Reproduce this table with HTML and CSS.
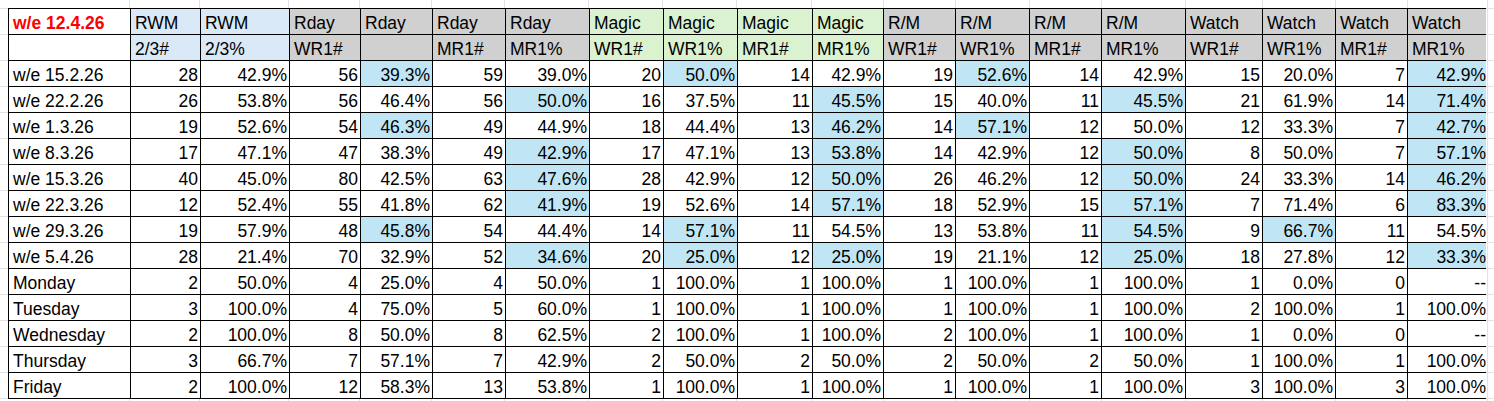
FILE: index.html
```html
<!DOCTYPE html>
<html lang="en">
<head>
<meta charset="utf-8">
<title>w/e 12.4.26</title>
<link rel="stylesheet" href="styles.css">
</head>
<body>
<table class="sheet">
  <colgroup>
    <col class="w122"><col class="w70"><col class="w89"><col class="w71"><col class="w72"><col class="w73"><col class="w84"><col class="w74"><col class="w74"><col class="w75"><col class="w71"><col class="w72"><col class="w74"><col class="w72"><col class="w84"><col class="w77"><col class="w73"><col class="w72"><col class="w81">
  </colgroup>
  <thead>
    <tr>
      <th class="title">w/e 12.4.26</th>
      <th class="blue">RWM</th><th class="blue">RWM</th>
      <th class="grey">Rday</th><th class="grey">Rday</th><th class="grey">Rday</th><th class="grey">Rday</th>
      <th class="green">Magic</th><th class="green">Magic</th><th class="green">Magic</th><th class="green">Magic</th>
      <th class="grey">R/M</th><th class="grey">R/M</th><th class="grey">R/M</th><th class="grey">R/M</th>
      <th class="grey">Watch</th><th class="grey">Watch</th><th class="grey">Watch</th><th class="grey">Watch</th>
    </tr>
    <tr>
      <th></th>
      <th class="blue">2/3#</th><th class="blue">2/3%</th>
      <th class="grey">WR1#</th><th class="grey"></th><th class="grey">MR1#</th><th class="grey">MR1%</th>
      <th class="green">WR1#</th><th class="green">WR1%</th><th class="green">MR1#</th><th class="green">MR1%</th>
      <th class="grey">WR1#</th><th class="grey">WR1%</th><th class="grey">MR1#</th><th class="grey">MR1%</th>
      <th class="grey">WR1#</th><th class="grey">WR1%</th><th class="grey">MR1#</th><th class="grey">MR1%</th>
    </tr>
  </thead>
  <tbody>
    <tr><td>w/e 15.2.26</td><td>28</td><td>42.9%</td><td>56</td><td class="hl">39.3%</td><td>59</td><td>39.0%</td><td>20</td><td class="hl">50.0%</td><td>14</td><td>42.9%</td><td>19</td><td class="hl">52.6%</td><td>14</td><td>42.9%</td><td>15</td><td>20.0%</td><td>7</td><td class="hl">42.9%</td></tr>
    <tr><td>w/e 22.2.26</td><td>26</td><td>53.8%</td><td>56</td><td>46.4%</td><td>56</td><td class="hl">50.0%</td><td>16</td><td>37.5%</td><td>11</td><td class="hl">45.5%</td><td>15</td><td>40.0%</td><td>11</td><td class="hl">45.5%</td><td>21</td><td>61.9%</td><td>14</td><td class="hl">71.4%</td></tr>
    <tr><td>w/e 1.3.26</td><td>19</td><td>52.6%</td><td>54</td><td class="hl">46.3%</td><td>49</td><td>44.9%</td><td>18</td><td>44.4%</td><td>13</td><td class="hl">46.2%</td><td>14</td><td class="hl">57.1%</td><td>12</td><td>50.0%</td><td>12</td><td>33.3%</td><td>7</td><td class="hl">42.7%</td></tr>
    <tr><td>w/e 8.3.26</td><td>17</td><td>47.1%</td><td>47</td><td>38.3%</td><td>49</td><td class="hl">42.9%</td><td>17</td><td>47.1%</td><td>13</td><td class="hl">53.8%</td><td>14</td><td>42.9%</td><td>12</td><td class="hl">50.0%</td><td>8</td><td>50.0%</td><td>7</td><td class="hl">57.1%</td></tr>
    <tr><td>w/e 15.3.26</td><td>40</td><td>45.0%</td><td>80</td><td>42.5%</td><td>63</td><td class="hl">47.6%</td><td>28</td><td>42.9%</td><td>12</td><td class="hl">50.0%</td><td>26</td><td>46.2%</td><td>12</td><td class="hl">50.0%</td><td>24</td><td>33.3%</td><td>14</td><td class="hl">46.2%</td></tr>
    <tr><td>w/e 22.3.26</td><td>12</td><td>52.4%</td><td>55</td><td>41.8%</td><td>62</td><td class="hl">41.9%</td><td>19</td><td>52.6%</td><td>14</td><td class="hl">57.1%</td><td>18</td><td>52.9%</td><td>15</td><td class="hl">57.1%</td><td>7</td><td>71.4%</td><td>6</td><td class="hl">83.3%</td></tr>
    <tr><td>w/e 29.3.26</td><td>19</td><td>57.9%</td><td>48</td><td class="hl">45.8%</td><td>54</td><td>44.4%</td><td>14</td><td class="hl">57.1%</td><td>11</td><td>54.5%</td><td>13</td><td>53.8%</td><td>11</td><td class="hl">54.5%</td><td>9</td><td class="hl">66.7%</td><td>11</td><td>54.5%</td></tr>
    <tr><td>w/e 5.4.26</td><td>28</td><td>21.4%</td><td>70</td><td>32.9%</td><td>52</td><td class="hl">34.6%</td><td>20</td><td class="hl">25.0%</td><td>12</td><td class="hl">25.0%</td><td>19</td><td>21.1%</td><td>12</td><td class="hl">25.0%</td><td>18</td><td>27.8%</td><td>12</td><td class="hl">33.3%</td></tr>
    <tr><td>Monday</td><td>2</td><td>50.0%</td><td>4</td><td>25.0%</td><td>4</td><td>50.0%</td><td>1</td><td>100.0%</td><td>1</td><td>100.0%</td><td>1</td><td>100.0%</td><td>1</td><td>100.0%</td><td>1</td><td>0.0%</td><td>0</td><td>--</td></tr>
    <tr><td>Tuesday</td><td>3</td><td>100.0%</td><td>4</td><td>75.0%</td><td>5</td><td>60.0%</td><td>1</td><td>100.0%</td><td>1</td><td>100.0%</td><td>1</td><td>100.0%</td><td>1</td><td>100.0%</td><td>2</td><td>100.0%</td><td>1</td><td>100.0%</td></tr>
    <tr><td>Wednesday</td><td>2</td><td>100.0%</td><td>8</td><td>50.0%</td><td>8</td><td>62.5%</td><td>2</td><td>100.0%</td><td>1</td><td>100.0%</td><td>2</td><td>100.0%</td><td>1</td><td>100.0%</td><td>1</td><td>0.0%</td><td>0</td><td>--</td></tr>
    <tr><td>Thursday</td><td>3</td><td>66.7%</td><td>7</td><td>57.1%</td><td>7</td><td>42.9%</td><td>2</td><td>50.0%</td><td>2</td><td>50.0%</td><td>2</td><td>50.0%</td><td>2</td><td>50.0%</td><td>1</td><td>100.0%</td><td>1</td><td>100.0%</td></tr>
    <tr><td>Friday</td><td>2</td><td>100.0%</td><td>12</td><td>58.3%</td><td>13</td><td>53.8%</td><td>1</td><td>100.0%</td><td>1</td><td>100.0%</td><td>1</td><td>100.0%</td><td>1</td><td>100.0%</td><td>3</td><td>100.0%</td><td>3</td><td>100.0%</td></tr>
  </tbody>
</table>
</body>
</html>
```
FILE: styles.css
```css
html {
  background-color: #ffffff;
  background-image:
    linear-gradient(to right,
      transparent 0 129px, #e2e2e2 129px 130px,
      transparent 130px 199px, #e2e2e2 199px 200px,
      transparent 200px 288px, #e2e2e2 288px 289px,
      transparent 289px 359px, #e2e2e2 359px 360px,
      transparent 360px 431px, #e2e2e2 431px 432px,
      transparent 432px 504px, #e2e2e2 504px 505px,
      transparent 505px 588px, #e2e2e2 588px 589px,
      transparent 589px 662px, #e2e2e2 662px 663px,
      transparent 663px 736px, #e2e2e2 736px 737px,
      transparent 737px 811px, #e2e2e2 811px 812px,
      transparent 812px 883px, #e2e2e2 883px 884px,
      transparent 884px 955px, #e2e2e2 955px 956px,
      transparent 956px 1029px, #e2e2e2 1029px 1030px,
      transparent 1030px 1101px, #e2e2e2 1101px 1102px,
      transparent 1102px 1185px, #e2e2e2 1185px 1186px,
      transparent 1186px 1262px, #e2e2e2 1262px 1263px,
      transparent 1263px 1335px, #e2e2e2 1335px 1336px,
      transparent 1336px 1407px, #e2e2e2 1407px 1408px,
      transparent 1408px 1487px, #e2e2e2 1487px 1488px,
      transparent 1488px),
    repeating-linear-gradient(to bottom, #e2e2e2 0 1px, transparent 1px 26px);
  background-repeat: repeat-y, repeat;
  background-position: 0 0, 0 8px;
  background-size: 100% 100%, auto;
}
body {
  margin: 8px;
  font-family: "Liberation Sans", Arial, sans-serif;
  color: #000;
}
.sheet {
  border-collapse: collapse;
  table-layout: fixed;
  width: 1480px;
  font-size: 17.5px;
}
.w122 { width: 122px; }
.w70 { width: 70px; }
.w71 { width: 71px; }
.w72 { width: 72px; }
.w73 { width: 73px; }
.w74 { width: 74px; }
.w75 { width: 75px; }
.w77 { width: 77px; }
.w81 { width: 81px; }
.w84 { width: 84px; }
.w89 { width: 89px; }
.sheet th,
.sheet td {
  border: 1px solid #000;
  height: 20px;
  line-height: 20px;
  padding: 4px 2px 1px 4px;
  white-space: nowrap;
  overflow: hidden;
  vertical-align: bottom;
  background: #ffffff;
}
.sheet th {
  font-weight: normal;
  text-align: left;
}
.sheet td {
  text-align: right;
}
.sheet td:first-child {
  text-align: left;
}
.sheet th.title {
  color: #ff0000;
  font-weight: bold;
}
.sheet .blue { background: #dae9f8; }
.sheet .grey { background: #d0d0d0; }
.sheet .green { background: #daf2d0; }
.sheet .hl { background: #c0e6f5; }
```
